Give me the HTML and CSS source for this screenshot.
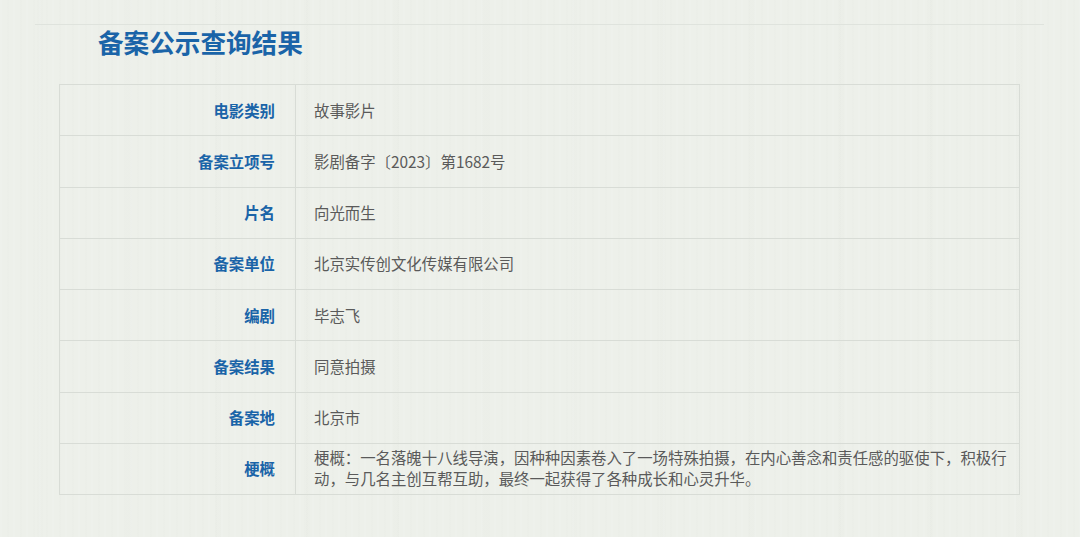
FILE: index.html
```html
<!DOCTYPE html>
<html lang="zh-CN">
<head>
<meta charset="utf-8">
<title>备案公示查询结果</title>
<link rel="stylesheet" href="styles.css">
</head>
<body>
<main class="page">
  <header class="head"><h1 class="title">备案公示查询结果</h1></header>
  <table class="info">
    <tr><th>电影类别</th><td>故事影片</td></tr>
    <tr><th>备案立项号</th><td>影剧备字〔2023〕第1682号</td></tr>
    <tr><th>片名</th><td>向光而生</td></tr>
    <tr><th>备案单位</th><td>北京实传创文化传媒有限公司</td></tr>
    <tr><th>编剧</th><td>毕志飞</td></tr>
    <tr><th>备案结果</th><td>同意拍摄</td></tr>
    <tr><th>备案地</th><td>北京市</td></tr>
    <tr><th>梗概</th><td class="long">梗概：一名落魄十八线导演，因种种因素卷入了一场特殊拍摄，在内心善念和责任感的驱使下，积极行动，与几名主创互帮互助，最终一起获得了各种成长和心灵升华。</td></tr>
  </table>
</main>
</body>
</html>
```
FILE: styles.css
```css
html, body { margin: 0; height: 100%; }
body {
  overflow: hidden;
  background-color: #edf0ea;
  background-image:
    repeating-linear-gradient(90deg, rgba(255,255,255,.08) 0 2px, transparent 2px 7px, rgba(120,125,110,.012) 7px 9px, transparent 9px 13px),
    repeating-linear-gradient(90deg, transparent 0 37px, rgba(120,125,110,.012) 37px 43px, transparent 43px 89px);
  font-family: "Microsoft YaHei", "Noto Sans CJK SC", sans-serif;
}
.page { padding: 24px 36px 0 35px; }
.head {
  border-top: 1px solid #dfe3dd;
  height: 59px;
  padding-left: 63px;
}
.title {
  margin: 0;
  color: #1a64a8;
  font-size: 25.6px;
  line-height: 33px;
  font-weight: 700;
}
.info {
  border-collapse: collapse;
  margin-left: 24px;
  width: 961px;
  table-layout: fixed;
  font-size: 15.4px;
}
.info th, .info td {
  border: 1px solid #d8dcd6;
  height: 49.25px;
  padding: 0 0 1px;
}
.info th {
  width: 215px;
  padding-right: 20px;
  text-align: right;
  color: #1a64a8;
  font-weight: 700;
}
.info td { padding-left: 18px; padding-right: 8px; color: #5a5a5a; }
.info td.long { line-height: 21px; padding-bottom: 2px; height: 48.25px; }
```
